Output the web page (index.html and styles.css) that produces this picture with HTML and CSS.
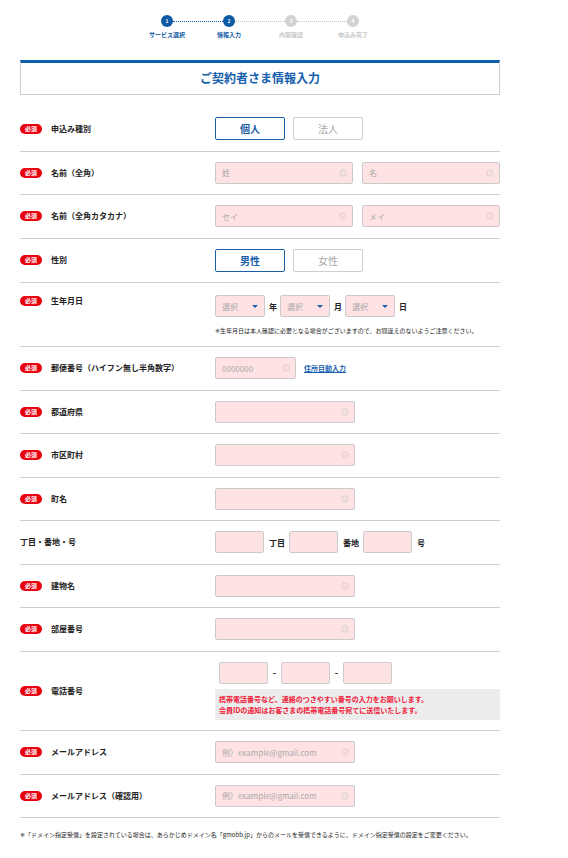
FILE: index.html
```html
<!DOCTYPE html>
<html lang="ja">
<head>
<meta charset="utf-8">
<link rel="stylesheet" href="styles.css">
</head>
<body>
<div class="page">
  <div class="stepper">
    <div class="dots">
      <span class="circle on">1</span><span class="line on"></span>
      <span class="circle on">2</span><span class="line"></span>
      <span class="circle">3</span><span class="line"></span>
      <span class="circle">4</span>
    </div>
    <div class="labels">
      <span class="slabel on">サービス選択</span>
      <span class="slabel on">情報入力</span>
      <span class="slabel">内容確認</span>
      <span class="slabel">申込み完了</span>
    </div>
  </div>

  <h1 class="title">ご契約者さま情報入力</h1>

  <div class="form">
    <div class="row">
      <div class="label"><span class="badge">必須</span>申込み種別</div>
      <div class="control">
        <span class="btn selected">個人</span>
        <span class="btn">法人</span>
      </div>
    </div>

    <div class="row">
      <div class="label"><span class="badge">必須</span>名前（全角）</div>
      <div class="control gap9">
        <div class="input grow"><span class="ph">姓</span><svg class="chk" viewBox="0 0 10 10"><circle cx="5" cy="5" r="4" /><path d="M3.2 5.1 L4.5 6.3 L6.9 3.8" /></svg></div>
        <div class="input grow"><span class="ph">名</span><svg class="chk" viewBox="0 0 10 10"><circle cx="5" cy="5" r="4" /><path d="M3.2 5.1 L4.5 6.3 L6.9 3.8" /></svg></div>
      </div>
    </div>

    <div class="row">
      <div class="label"><span class="badge">必須</span>名前（全角カタカナ）</div>
      <div class="control gap9">
        <div class="input grow"><span class="ph">セイ</span><svg class="chk" viewBox="0 0 10 10"><circle cx="5" cy="5" r="4" /><path d="M3.2 5.1 L4.5 6.3 L6.9 3.8" /></svg></div>
        <div class="input grow"><span class="ph">メイ</span><svg class="chk" viewBox="0 0 10 10"><circle cx="5" cy="5" r="4" /><path d="M3.2 5.1 L4.5 6.3 L6.9 3.8" /></svg></div>
      </div>
    </div>

    <div class="row">
      <div class="label"><span class="badge">必須</span>性別</div>
      <div class="control">
        <span class="btn selected">男性</span>
        <span class="btn">女性</span>
      </div>
    </div>

    <div class="row top">
      <div class="label lt"><span class="badge">必須</span>生年月日</div>
      <div class="control col">
        <div class="inline">
          <div class="select"><span class="ph">選択</span><span class="arrow"></span></div><span class="unit">年</span>
          <div class="select"><span class="ph">選択</span><span class="arrow"></span></div><span class="unit">月</span>
          <div class="select"><span class="ph">選択</span><span class="arrow"></span></div><span class="unit">日</span>
        </div>
        <p class="note"><span class="kome">※</span>生年月日は本人確認に必要となる場合がございますので、お間違えのないようご注意ください。</p>
      </div>
    </div>

    <div class="row">
      <div class="label"><span class="badge">必須</span>郵便番号（ハイフン無し半角数字）</div>
      <div class="control">
        <div class="input w80"><span class="ph">0000000</span><svg class="chk" viewBox="0 0 10 10"><circle cx="5" cy="5" r="4" /><path d="M3.2 5.1 L4.5 6.3 L6.9 3.8" /></svg></div>
        <a class="link">住所自動入力</a>
      </div>
    </div>

    <div class="row">
      <div class="label"><span class="badge">必須</span>都道府県</div>
      <div class="control">
        <div class="input w140"><span class="ph"></span><svg class="chk" viewBox="0 0 10 10"><circle cx="5" cy="5" r="4" /><path d="M3.2 5.1 L4.5 6.3 L6.9 3.8" /></svg></div>
      </div>
    </div>

    <div class="row">
      <div class="label"><span class="badge">必須</span>市区町村</div>
      <div class="control">
        <div class="input w140"><span class="ph"></span><svg class="chk" viewBox="0 0 10 10"><circle cx="5" cy="5" r="4" /><path d="M3.2 5.1 L4.5 6.3 L6.9 3.8" /></svg></div>
      </div>
    </div>

    <div class="row">
      <div class="label"><span class="badge">必須</span>町名</div>
      <div class="control">
        <div class="input w140"><span class="ph"></span><svg class="chk" viewBox="0 0 10 10"><circle cx="5" cy="5" r="4" /><path d="M3.2 5.1 L4.5 6.3 L6.9 3.8" /></svg></div>
      </div>
    </div>

    <div class="row">
      <div class="label">丁目・番地・号</div>
      <div class="control">
        <div class="input w50"></div><span class="unit u2">丁目</span>
        <div class="input w50"></div><span class="unit u2">番地</span>
        <div class="input w50"></div><span class="unit u3">号</span>
      </div>
    </div>

    <div class="row">
      <div class="label"><span class="badge">必須</span>建物名</div>
      <div class="control">
        <div class="input w140"><span class="ph"></span><svg class="chk" viewBox="0 0 10 10"><circle cx="5" cy="5" r="4" /><path d="M3.2 5.1 L4.5 6.3 L6.9 3.8" /></svg></div>
      </div>
    </div>

    <div class="row">
      <div class="label"><span class="badge">必須</span>部屋番号</div>
      <div class="control">
        <div class="input w140"><span class="ph"></span><svg class="chk" viewBox="0 0 10 10"><circle cx="5" cy="5" r="4" /><path d="M3.2 5.1 L4.5 6.3 L6.9 3.8" /></svg></div>
      </div>
    </div>

    <div class="row">
      <div class="label"><span class="badge">必須</span>電話番号</div>
      <div class="control col">
        <div class="inline phone">
          <div class="input w50"></div><span class="dash">-</span>
          <div class="input w50"></div><span class="dash">-</span>
          <div class="input w50"></div>
        </div>
        <div class="warn">
          <p>携帯電話番号など、連絡のつきやすい番号の入力をお願いします。</p>
          <p>会員IDの通知はお客さまの携帯電話番号宛てに送信いたします。</p>
        </div>
      </div>
    </div>

    <div class="row">
      <div class="label"><span class="badge">必須</span>メールアドレス</div>
      <div class="control">
        <div class="input w140"><span class="ph">例）example@gmail.com</span><svg class="chk" viewBox="0 0 10 10"><circle cx="5" cy="5" r="4" /><path d="M3.2 5.1 L4.5 6.3 L6.9 3.8" /></svg></div>
      </div>
    </div>

    <div class="row">
      <div class="label"><span class="badge">必須</span>メールアドレス（確認用）</div>
      <div class="control">
        <div class="input w140"><span class="ph">例）example@gmail.com</span><svg class="chk" viewBox="0 0 10 10"><circle cx="5" cy="5" r="4" /><path d="M3.2 5.1 L4.5 6.3 L6.9 3.8" /></svg></div>
      </div>
    </div>
  </div>

  <p class="foot"><span class="kome">※</span>「ドメイン指定受信」を設定されている場合は、あらかじめドメイン名「gmobb.jp」からのメールを受信できるように、ドメイン指定受信の設定をご変更ください。</p>
</div>
</body>
</html>
```

FILE: styles.css
```css
* { box-sizing: border-box; }
html, body { margin: 0; padding: 0; background: #fff; }
body {
  font-family: "Noto Sans CJK JP", "Noto Sans", sans-serif;
  color: #222;
}
p { margin: 0; }
.page {
  width: 480px;
  margin-left: 20px;
  padding-top: 15px;
}

/* stepper */
.stepper { display: flex; flex-direction: column; align-items: center; }
.dots { display: flex; align-items: center; height: 12px; }
.circle {
  width: 12px; height: 12px; border-radius: 50%;
  background: #d2d2d2; color: #fff;
  font-size: 5px; font-weight: 700; line-height: 12px; text-align: center;
}
.circle.on { background: #0d59a3; }
.line {
  width: 50px; height: 0;
  border-top: 1px dotted #c4c4c4;
}
.line.on { border-top-color: #0d59a3; }
.labels { display: flex; margin-top: 4px; }
.slabel {
  width: 62px; text-align: center;
  font-size: 6px; line-height: 8px; font-weight: 700; color: #c8c8c8;
}
.slabel.on { color: #0d59a3; }

/* title */
.title {
  margin: 21px 0 0;
  height: 35px;
  border: 1px solid #cdcdcd;
  border-top: 3px solid #0d5fa8;
  text-align: center;
  font-size: 12px; line-height: 30px; font-weight: 700;
  color: #1460ad;
}

/* form */
.form { margin-top: 12px; }
.row {
  display: flex; align-items: center;
  padding: 10.25px 0;
  border-bottom: 1px solid #cfcfcf;
}
.row.top { align-items: flex-start; padding: 12px 0 11px; }
.label {
  width: 195px; flex: none;
  display: flex; align-items: center;
  font-size: 8px; font-weight: 700; color: #222;
  line-height: 10px;
}
.label.lt { margin-top: 1px; }
.badge {
  width: 22px; height: 10px; border-radius: 5px;
  background: #e8000f; color: #fff;
  font-size: 6px; line-height: 10px; text-align: center; font-weight: 700;
  margin-right: 9px; flex: none;
}
.control { flex: 1; display: flex; align-items: center; min-height: 22px; }
.control.col { flex-direction: column; align-items: flex-start; }
.gap9 { gap: 9px; }
.inline { display: flex; align-items: center; }

.btn {
  width: 70px; height: 23px;
  border: 1px solid #cfcfcf; border-radius: 2px;
  display: flex; align-items: center; justify-content: center;
  font-size: 10px; color: #a8a8a8; margin-right: 8px;
}
.btn.selected { border-color: #1a5ea6; color: #1a5ea6; font-weight: 700; }

.input {
  height: 22px;
  background: #ffe3e4;
  border: 1px solid #cbcbcb; border-radius: 2px;
  display: flex; align-items: center; justify-content: space-between;
  padding: 0 5px 0 6px;
}
.grow { flex: 1; }
.w80 { width: 81px; }
.w140 { width: 140px; }
.w50 { width: 49px; }
.ph { font-size: 8px; color: #a9a9a9; }
.chk { width: 8px; height: 8px; fill: none; stroke: #c3c3c3; stroke-width: 0.8; }

.select {
  width: 50px; height: 22px;
  background: #ffe3e4;
  border: 1px solid #cbcbcb; border-radius: 2px;
  display: flex; align-items: center; justify-content: space-between;
  padding: 0 6px 0 6px;
}
.arrow {
  width: 0; height: 0;
  border-left: 3px solid transparent; border-right: 3px solid transparent;
  border-top: 3px solid #1b5fa8;
}
.unit { font-size: 8px; font-weight: 700; margin: 0 3px 0 4px; }
.unit.u2 { margin: 0 4px 0 5px; }
.unit.u3 { margin: 0 0 0 5px; }
.note { font-size: 6px; line-height: 8px; margin-top: 10px; color: #222; }
.kome { font-family: "DejaVu Sans", sans-serif; color: #222; }

.link {
  font-size: 7px; font-weight: 700; color: #1460ad;
  text-decoration: underline; margin-left: 8px;
}

.phone { margin-left: 4px; }
.dash { font-size: 9px; font-weight: 700; width: 13px; text-align: center; }
.warn {
  margin-top: 5px; width: 285px;
  background: #ececec;
  padding: 5px 4px 4px;
  color: #f0203a; font-size: 7px; line-height: 11px; font-weight: 700;
}

.foot {
  margin-top: 13px;
  font-size: 6px; line-height: 8px; color: #222;
}
```
